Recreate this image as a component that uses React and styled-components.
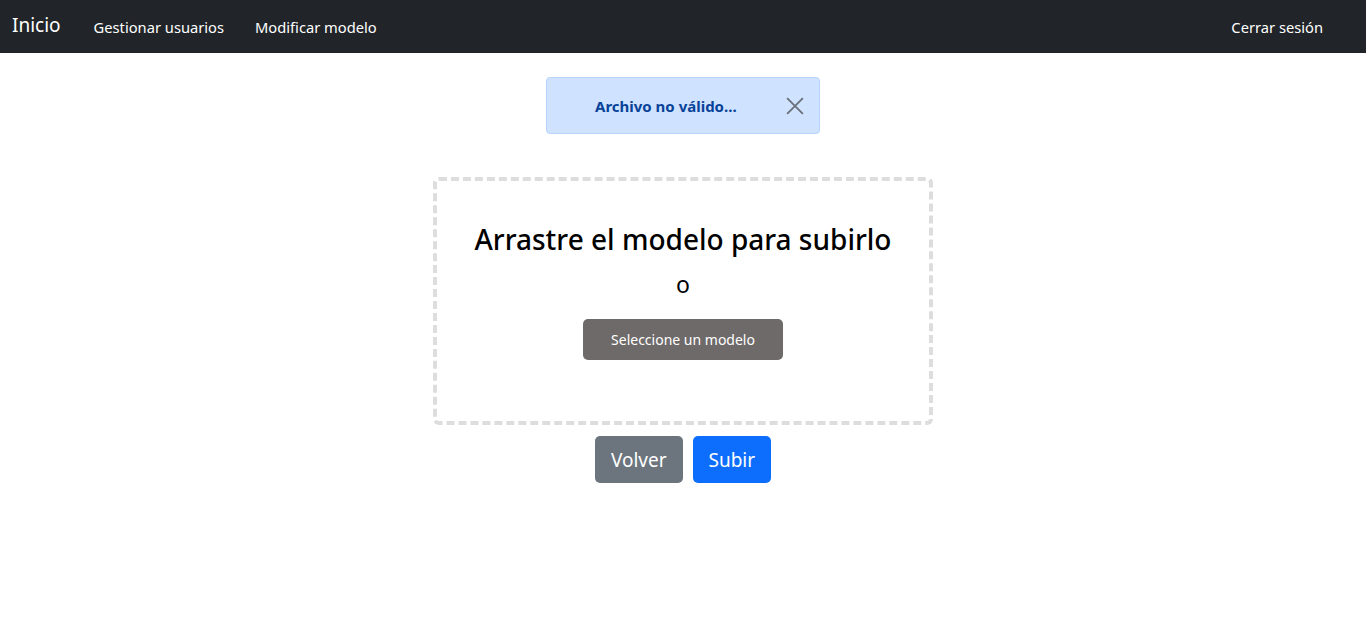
import styled, { createGlobalStyle } from "styled-components";

const Global = createGlobalStyle`
    body {
        margin: 0;
        font-family: "Noto Sans", "Open Sans", sans-serif;
        background: #FFFFFF;
        color: #212529;
    }
`

function App() {
    return (
        <>
            <Global />
            <Navbar>
                <Left>
                    <Brand>Inicio</Brand>
                    <NavLink>Gestionar usuarios</NavLink>
                    <NavLink>Modificar modelo</NavLink>
                </Left>
                <NavLink>Cerrar sesión</NavLink>
            </Navbar>
            <Main>
                <Alert>
                    <span>Archivo no válido...</span>
                    <Close aria-label="cerrar">
                        <svg width="18" height="18" viewBox="0 0 16 16">
                            <path d="M1 1L15 15M15 1L1 15" stroke="#6a7078" strokeWidth="1.6" fill="none" />
                        </svg>
                    </Close>
                </Alert>
                <Dropzone>
                    <Title>Arrastre el modelo para subirlo</Title>
                    <Or>o</Or>
                    <SelectButton>Seleccione un modelo</SelectButton>
                </Dropzone>
                <Actions>
                    <BigButton $color="#6c757d">Volver</BigButton>
                    <BigButton $color="#0d6efd">Subir</BigButton>
                </Actions>
            </Main>
        </>
    );
}

const Navbar = styled.nav`
    height: 53px;
    background: #212529;
    display: flex;
    align-items: center;
    justify-content: space-between;
    padding: 0 43px 0 12px;
    color: #FFFFFF;
`

const Left = styled.div`
    display: flex;
    align-items: center;
`

const Brand = styled.span`
    font-size: 19px;
    margin-right: 33px;
    margin-top: -4px;
`

const NavLink = styled.span`
    font-size: 14.7px;
    margin-right: 31px;

    &:last-child {
        margin-right: 0;
    }
`

const Main = styled.main`
    display: flex;
    flex-direction: column;
    align-items: center;
    padding-top: 24px;
`

const Alert = styled.div`
    width: 274px;
    height: 57px;
    box-sizing: border-box;
    background: #cfe2ff;
    border: 1px solid #b6d4fe;
    border-radius: 4px;
    color: #084298;
    font-weight: 700;
    font-size: 15px;
    display: flex;
    align-items: center;
    justify-content: space-between;
    padding: 0 15px 0 48px;
`

const Close = styled.button`
    border: none;
    background: none;
    padding: 0;
    display: flex;
    cursor: pointer;
`

const Dropzone = styled.div`
    margin-top: 43px;
    width: 500px;
    height: 248px;
    box-sizing: border-box;
    border: 4px dashed #dddddd;
    border-radius: 6px;
    display: flex;
    flex-direction: column;
    align-items: center;
    padding-top: 42px;
`

const Title = styled.h3`
    margin: 0;
    font-size: 28px;
    font-weight: 500;
    color: #000000;
    line-height: 1.2;
`

const Or = styled.p`
    margin: 14px 0 0;
    font-size: 23px;
    color: #000000;
    line-height: 1.2;
`

const SelectButton = styled.button`
    margin-top: 21px;
    width: 200px;
    height: 41px;
    border: none;
    border-radius: 5px;
    background: #6e6a69;
    color: #FFFFFF;
    font-family: inherit;
    font-size: 14px;
`

const Actions = styled.div`
    margin-top: 11px;
    display: flex;
    gap: 10px;
`

const BigButton = styled.button`
    height: 47px;
    padding: 0 16px;
    border: none;
    border-radius: 5px;
    background: ${p => p.$color};
    color: #FFFFFF;
    font-family: inherit;
    font-size: 19px;
`

export default App;
